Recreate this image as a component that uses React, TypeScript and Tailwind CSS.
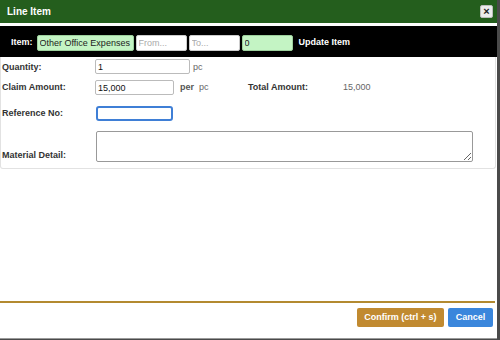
import React from 'react';

const font = "font-['Liberation_Sans',Arial,sans-serif]";

export default function App() {
  return (
    <div className={`flex w-[500px] h-[340px] bg-[#4a4a4a] ${font}`}>
      <div className="flex flex-col w-[497px] h-[339px] bg-white border-b border-[#9a9a9a]">
        {/* Title bar */}
        <div className="flex items-center justify-between h-[23px] bg-[#245e1d] pl-[7px] pr-[4px]">
          <span className="text-white text-[10px] font-bold">Line Item</span>
          <button className="flex items-center justify-center w-[13px] h-[13px] bg-[#ececec] border border-[#bdbdbd] rounded-[2px] text-[11px] font-bold leading-none text-[#222]">
            ×
          </button>
        </div>

        {/* Item bar */}
        <div className="mt-[3px] flex items-center h-[31px] bg-black pl-[11px] pt-[3px]">
          <span className="text-white text-[9px] font-bold mr-[4px]">Item:</span>
          <input
            readOnly
            value="Other Office Expenses"
            className="w-[97px] h-[16px] px-[2px] bg-[#c4f4c4] border border-[#9ccf9c] rounded-[2px] text-[9px] text-[#222] outline-none"
          />
          <input
            readOnly
            placeholder="From..."
            className="ml-[2px] w-[51px] h-[16px] px-[2px] bg-white border border-[#ccc] rounded-[2px] text-[9px] placeholder:text-[#aaa] outline-none"
          />
          <input
            readOnly
            placeholder="To..."
            className="ml-[2px] w-[51px] h-[16px] px-[2px] bg-white border border-[#ccc] rounded-[2px] text-[9px] placeholder:text-[#aaa] outline-none"
          />
          <input
            readOnly
            value="0"
            className="ml-[2px] w-[51px] h-[16px] px-[2px] bg-[#c4f4c4] border border-[#9ccf9c] rounded-[2px] text-[9px] text-[#222] outline-none"
          />
          <span className="ml-[6px] text-white text-[9px] font-bold">Update Item</span>
        </div>

        {/* Form panel */}
        <div className="w-[496px] h-[112px] border border-t-0 border-[#e2e2e2] rounded-b-[3px] pl-[1px] pt-[2px] text-[9px] text-[#333]">
          <div className="flex items-end h-[15px]">
            <span className="w-[93px] font-bold">Quantity:</span>
            <input
              readOnly
              value="1"
              className="w-[95px] h-[15px] px-[2px] border border-[#bbb] rounded-[2px] text-[9px] text-[#111] outline-none"
            />
            <span className="ml-[3px] text-[#666]">pc</span>
          </div>

          <div className="flex items-center h-[15px] mt-[6px]">
            <div className="flex items-center w-[246px]">
              <span className="w-[93px] font-bold">Claim Amount:</span>
              <input
                readOnly
                value="15,000"
                className="w-[79px] h-[15px] px-[2px] border border-[#bbb] rounded-[2px] text-[9px] text-[#111] outline-none"
              />
              <span className="ml-[6px] font-bold text-[#555]">per</span>
              <span className="ml-[5px] text-[#666]">pc</span>
            </div>
            <span className="w-[95px] font-bold">Total Amount:</span>
            <span className="text-[#666]">15,000</span>
          </div>

          <div className="flex items-center h-[15px] mt-[11px]">
            <span className="w-[94px] font-bold">Reference No:</span>
            <input
              readOnly
              className="w-[77px] h-[15px] px-[2px] border-2 border-[#3f7fd6] rounded-[3px] text-[9px] outline-none"
            />
          </div>

          <div className="flex items-end mt-[10px]">
            <span className="w-[94px] font-bold leading-[10px] pb-[2px]">Material Detail:</span>
            <textarea
              readOnly
              className="w-[377px] h-[31px] border border-[#999] rounded-[2px] text-[9px] outline-none resize-y"
            />
          </div>
        </div>

        <div className="flex-1" />

        {/* Footer */}
        <div className="h-[2px] bg-[#b38a30] mr-[2px]" />
        <div className="flex justify-end gap-[4px] pt-[5px] pr-[4px] h-[35px]">
          <button className="w-[87px] h-[19px] bg-[#c18a30] rounded-[2px] text-white text-[9px] font-bold">
            Confirm (ctrl + s)
          </button>
          <button className="w-[45px] h-[19px] bg-[#3a86dc] rounded-[2px] text-white text-[9px] font-bold">
            Cancel
          </button>
        </div>
      </div>
      <div className="w-[3px] h-full" />
    </div>
  );
}
